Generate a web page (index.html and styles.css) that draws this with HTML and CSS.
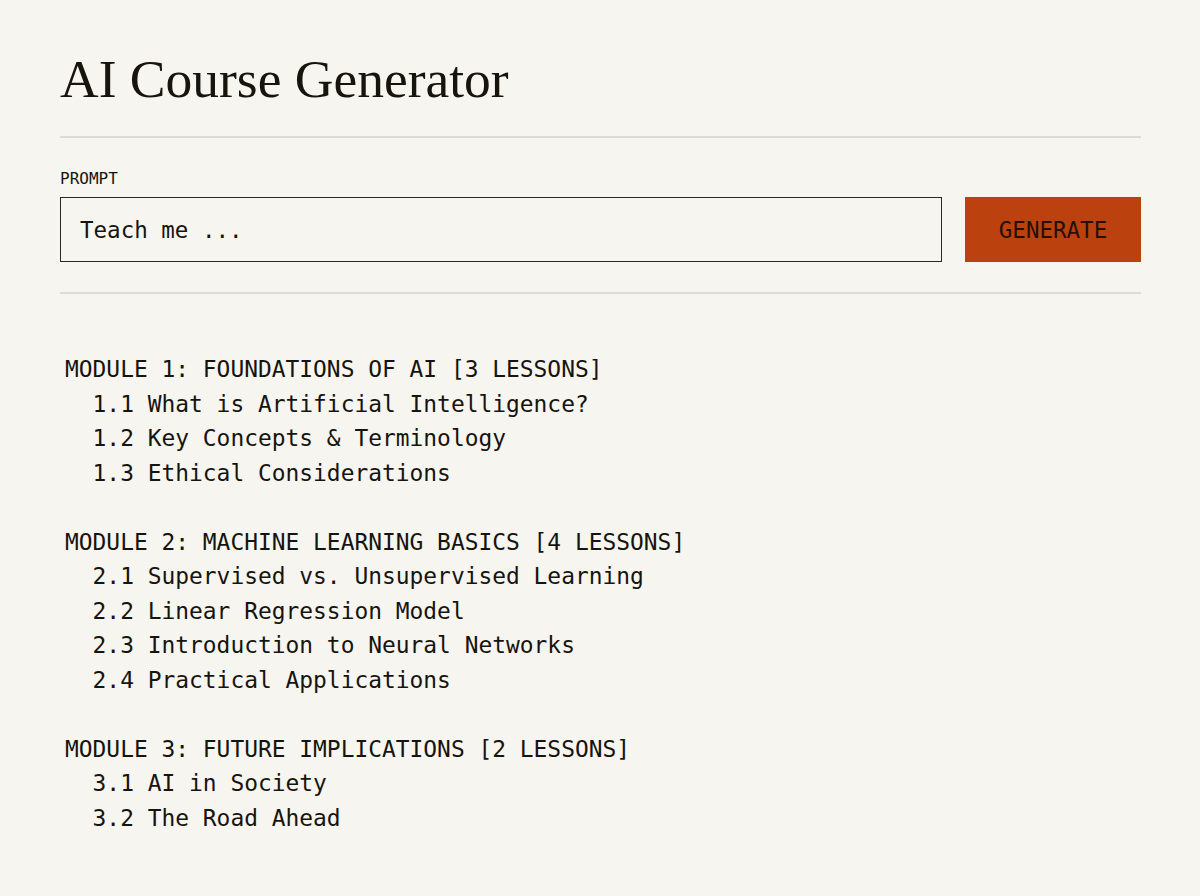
FILE: index.html
```html
<!DOCTYPE html>
<html lang="en">
<head>
    <meta charset="UTF-8">
    <meta name="viewport" content="width=device-width, initial-scale=1.0">
    <title>AI Course Generator</title>
    <link rel="stylesheet" href="styles.css">
</head>
<body>
    <main class="page">
        <!-- Title -->
        <header class="title-bar">
            <h1>AI Course Generator</h1>
        </header>

        <!-- Prompt -->
        <section class="prompt">
            <label for="prompt" class="prompt-label">PROMPT</label>
            <div class="prompt-row">
                <input type="text" id="prompt" class="prompt-input" placeholder="Teach me ...">
                <button class="generate-btn">GENERATE</button>
            </div>
        </section>

        <!-- Course outline -->
        <section class="outline">
<pre class="outline-text">MODULE 1: FOUNDATIONS OF AI [3 LESSONS]
  1.1 What is Artificial Intelligence?
  1.2 Key Concepts &amp; Terminology
  1.3 Ethical Considerations

MODULE 2: MACHINE LEARNING BASICS [4 LESSONS]
  2.1 Supervised vs. Unsupervised Learning
  2.2 Linear Regression Model
  2.3 Introduction to Neural Networks
  2.4 Practical Applications

MODULE 3: FUTURE IMPLICATIONS [2 LESSONS]
  3.1 AI in Society
  3.2 The Road Ahead</pre>
        </section>
    </main>
</body>
</html>
```

FILE: styles.css
```css
body {
    margin: 0;
    background-color: #f6f5f0;
    color: #16140e;
}

.page {
    padding: 0 59px 0 60px;
}

.title-bar {
    border-bottom: 2px solid #dcdbd5;
    padding: 48px 0 26px;
}

.title-bar h1 {
    margin: 0;
    font-family: "Liberation Serif", serif;
    font-weight: normal;
    font-size: 53.5px;
    line-height: 62px;
    color: #16140c;
}

.prompt {
    border-bottom: 2px solid #dcdbd5;
    padding: 31px 0 30px;
}

.prompt-label {
    display: block;
    font-family: "DejaVu Sans Mono", monospace;
    font-size: 16px;
    line-height: 20px;
    margin-bottom: 8px;
    color: #16140e;
}

.prompt-row {
    display: flex;
    gap: 23px;
}

.prompt-input {
    flex: 1;
    height: 65px;
    box-sizing: border-box;
    border: 1.5px solid #2a2822;
    background: transparent;
    padding: 0 19px;
    font-family: "DejaVu Sans Mono", monospace;
    font-size: 22.5px;
    color: #16140e;
    outline: none;
}

.prompt-input::placeholder {
    color: #16140e;
    opacity: 1;
}

.generate-btn {
    width: 176px;
    height: 65px;
    border: none;
    background-color: #bb420f;
    font-family: "DejaVu Sans Mono", monospace;
    font-size: 22.5px;
    color: #261006;
    cursor: pointer;
}

.outline {
    padding: 58px 0 0 5px;
}

.outline-text {
    margin: 0;
    font-family: "DejaVu Sans Mono", monospace;
    font-size: 22.9px;
    line-height: 34.5px;
    color: #16140e;
}
```
